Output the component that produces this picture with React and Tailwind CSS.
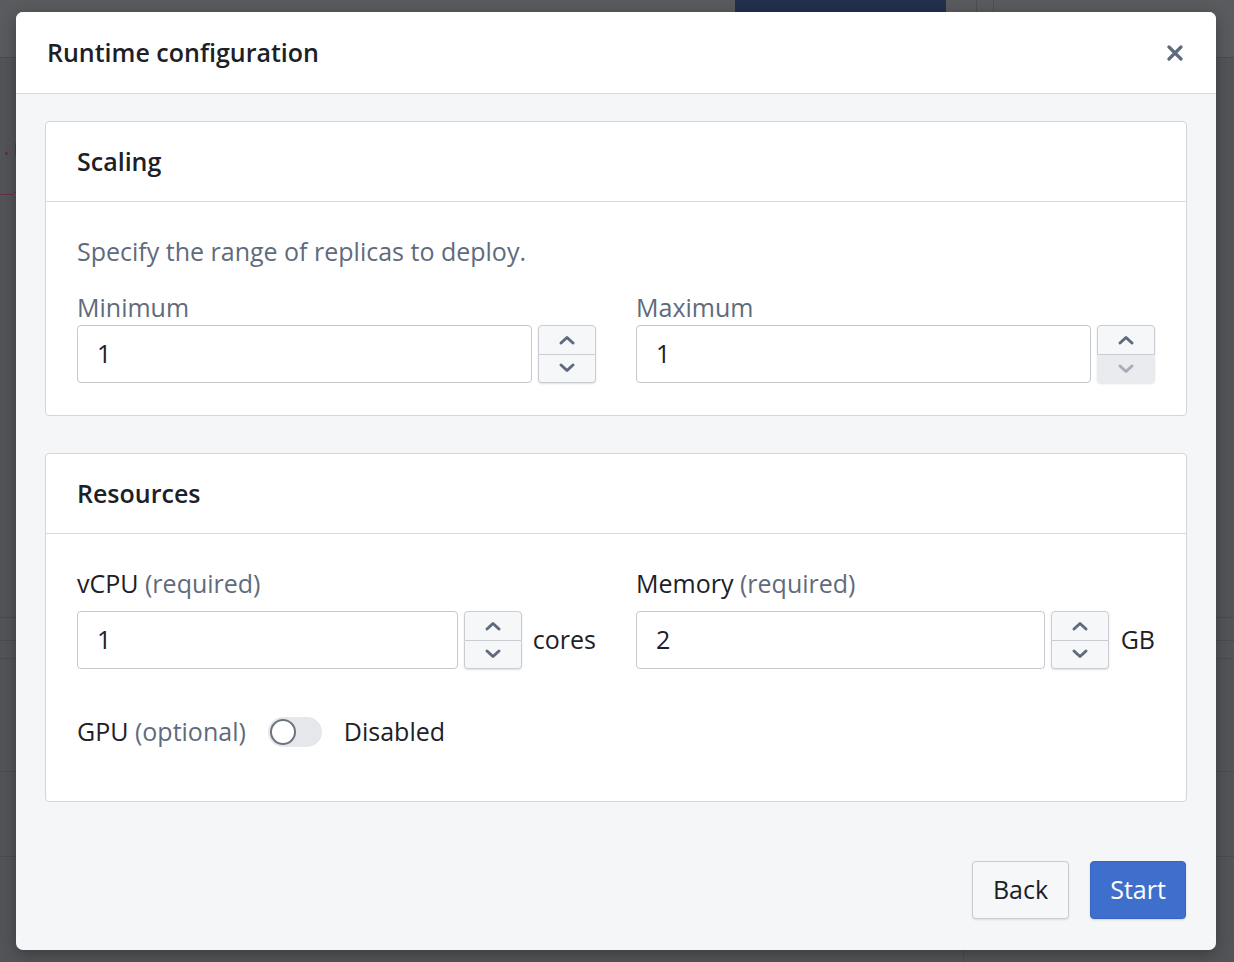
import React from "react";

const font = { fontFamily: "'Open Sans', 'Noto Sans', sans-serif" };

function Chevron({ up, disabled }) {
  return (
    <svg width="20" height="12" viewBox="0 0 20 12" fill="none">
      <path
        d={up ? "M4 9 L10 3.5 L16 9" : "M4 3 L10 8.5 L16 3"}
        stroke={disabled ? "#a7adb7" : "#5f6b7c"}
        strokeWidth="3"
        strokeLinecap="round"
        strokeLinejoin="round"
      />
    </svg>
  );
}

function Stepper({ downDisabled }) {
  return (
    <div className="flex flex-col w-[58px] h-[58px] shrink-0 rounded-[4px] shadow-[0_1px_2px_rgba(0,0,0,0.12)]">
      <div className="flex-1 flex items-center justify-center bg-[#f6f7f9] border border-[#c9ccd0] rounded-t-[4px]">
        <Chevron up />
      </div>
      <div
        className={
          downDisabled
            ? "flex-1 flex items-center justify-center bg-[#e9ebee] rounded-b-[4px]"
            : "flex-1 flex items-center justify-center bg-[#f6f7f9] border border-t-0 border-[#c9ccd0] rounded-b-[4px]"
        }
      >
        <Chevron disabled={downDisabled} />
      </div>
    </div>
  );
}

function NumberInput({ value, downDisabled }) {
  return (
    <div className="flex items-center flex-1 gap-[6px]">
      <div className="flex-1 h-[58px] flex items-center pl-[19px] bg-white border border-[#c5c8cc] rounded-[4px] text-[25px] text-[#1c2127]">
        {value}
      </div>
      <Stepper downDisabled={downDisabled} />
    </div>
  );
}

function Card({ title, children }) {
  return (
    <div className="bg-white border border-[#d3d6da] rounded-[4px]">
      <div className="h-[80px] border-b border-[#d8dadd] flex items-center pl-[31px] text-[25px] font-semibold text-[#1c2127]">
        {title}
      </div>
      {children}
    </div>
  );
}

export default function App() {
  return (
    <div className="relative w-[1234px] h-[962px] overflow-hidden bg-[#535458]" style={font}>
      {/* dimmed app behind */}
      <div className="flex flex-col h-full">
        <div className="h-[58px] shrink-0 flex border-b border-[#4a4b4f] bg-[#5a5b5f]">
          <div className="w-[735px]" />
          <div className="w-[211px] h-[12px] bg-[#22304c]" />
          <div className="w-[30px]" />
          <div className="w-[18px] border-l border-r border-[#4d4e52]" />
        </div>
        <div className="h-[560px] shrink-0 border-b border-[#4a4b4f] pt-[73px] font-mono text-[22px] leading-[38px] text-[#6a2d46] whitespace-nowrap">
          <div>.n</div>
          <div>_i</div>
        </div>
        <div className="h-[23px] shrink-0 border-b border-[#4a4b4f]" />
        <div className="h-[18px] shrink-0 border-b border-[#4a4b4f]" />
        <div className="h-[113px] shrink-0 border-b border-[#4a4b4f]" />
        <div className="h-[85px] shrink-0 border-b border-[#4a4b4f]" />
        <div className="flex-1 flex">
          <div className="w-[964px] border-r border-[#4a4b4f]" />
        </div>
      </div>

      {/* modal */}
      <div className="absolute left-[16px] top-[12px] w-[1200px] h-[938px] rounded-[7px] overflow-hidden bg-[#f5f6f8] flex flex-col shadow-[0_4px_16px_rgba(0,0,0,0.3)]">
        <div className="h-[82px] shrink-0 bg-white border-b border-[#d8dadd] flex items-center justify-between pl-[31px] pr-[33px]">
          <div className="text-[25px] font-semibold text-[#1c2127]">Runtime configuration</div>
          <svg width="16" height="16" viewBox="0 0 16 16">
            <path d="M2 2 L14 14 M14 2 L2 14" stroke="#5f6b7c" strokeWidth="3.2" strokeLinecap="round" />
          </svg>
        </div>

        <div className="flex-1 flex flex-col px-[29px] pt-[27px]">
          <Card title="Scaling">
            <div className="px-[31px] pt-[33px] pb-[32px]">
              <div className="text-[25px] leading-[32px] text-[#5f6b7c]">
                Specify the range of replicas to deploy.
              </div>
              <div className="mt-[24px] grid grid-cols-2 gap-x-[40px]">
                <div className="flex flex-col">
                  <div className="text-[25px] leading-[32px] text-[#5f6b7c]">Minimum</div>
                  <div className="mt-[2px] flex">
                    <NumberInput value="1" />
                  </div>
                </div>
                <div className="flex flex-col">
                  <div className="text-[25px] leading-[32px] text-[#5f6b7c]">Maximum</div>
                  <div className="mt-[2px] flex">
                    <NumberInput value="1" downDisabled />
                  </div>
                </div>
              </div>
            </div>
          </Card>

          <div className="mt-[37px]">
            <Card title="Resources">
              <div className="px-[31px] pt-[33px] pb-[53px]">
                <div className="grid grid-cols-2 gap-x-[40px]">
                  <div className="flex flex-col">
                    <div className="text-[25px] leading-[32px] text-[#1c2127]">
                      vCPU <span className="text-[#5f6b7c]">(required)</span>
                    </div>
                    <div className="mt-[12px] flex items-center gap-[11px]">
                      <NumberInput value="1" />
                      <span className="text-[25px] text-[#1c2127]">cores</span>
                    </div>
                  </div>
                  <div className="flex flex-col">
                    <div className="text-[25px] leading-[32px] text-[#1c2127]">
                      Memory <span className="text-[#5f6b7c]">(required)</span>
                    </div>
                    <div className="mt-[12px] flex items-center gap-[12px]">
                      <NumberInput value="2" />
                      <span className="text-[25px] text-[#1c2127]">GB</span>
                    </div>
                  </div>
                </div>
                <div className="mt-[47px] flex items-center h-[32px] text-[25px] text-[#1c2127]">
                  <span>
                    GPU <span className="text-[#5f6b7c]">(optional)</span>
                  </span>
                  <div className="ml-[22px] w-[54px] h-[30px] rounded-full bg-[#e5e7ea] flex items-center pl-[2px]">
                    <div className="w-[26px] h-[26px] rounded-full bg-white border-2 border-[#6b7480]" />
                  </div>
                  <span className="ml-[22px]">Disabled</span>
                </div>
              </div>
            </Card>
          </div>

          <div className="mt-[59px] flex justify-end gap-[21px] pr-[1px]">
            <button className="h-[58px] w-[97px] rounded-[4px] bg-[#f6f7f9] border border-[#c9ccd0] text-[25px] text-[#1c2127] shadow-[0_1px_2px_rgba(0,0,0,0.1)]">
              Back
            </button>
            <button className="h-[58px] w-[96px] rounded-[4px] bg-[#3f6fcc] border border-[#3765c0] text-[25px] text-white shadow-[0_1px_2px_rgba(0,0,0,0.15)]">
              Start
            </button>
          </div>
        </div>
      </div>
    </div>
  );
}
